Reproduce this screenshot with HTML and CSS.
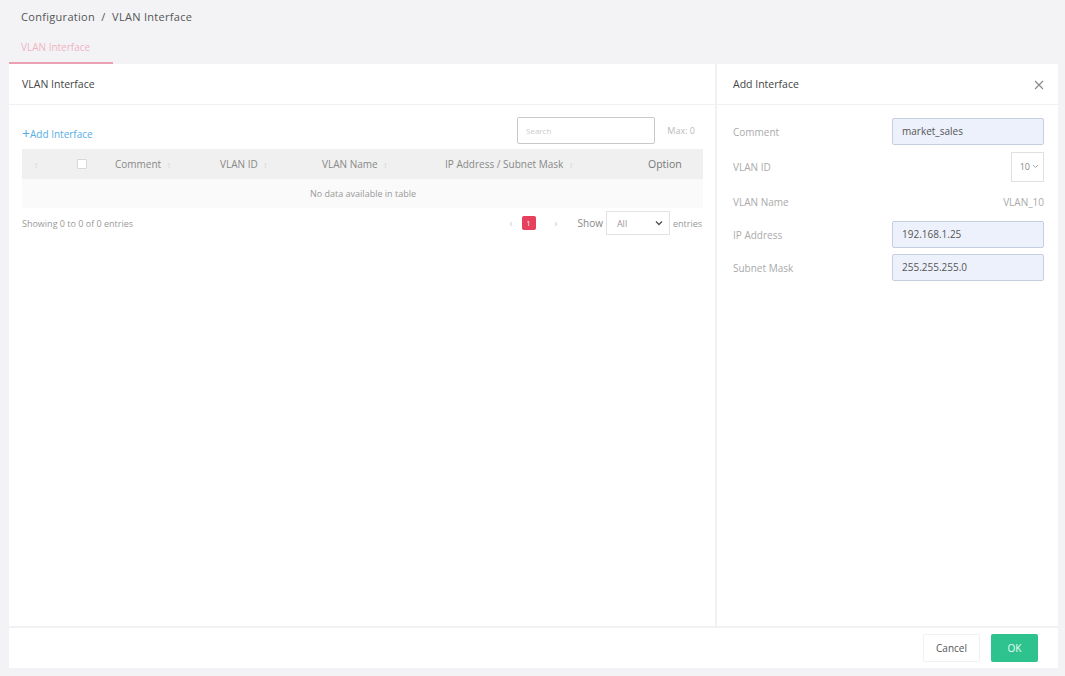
FILE: index.html
```html
<!DOCTYPE html>
<html lang="en">
<head>
    <meta charset="UTF-8">
    <meta name="viewport" content="width=device-width, initial-scale=1.0">
    <title>VLAN Interface</title>
    <link rel="stylesheet" href="styles.css">
</head>
<body>
    <div class="page">
        <div class="breadcrumb">Configuration&nbsp; /&nbsp; VLAN Interface</div>
        <div class="tabs">
            <div class="tab active">VLAN Interface</div>
        </div>

        <div class="card">
            <div class="card-body">
                <div class="panel left">
                    <div class="panel-head">VLAN Interface</div>
                    <div class="panel-content">
                        <div class="toolbar">
                            <a class="add-link"><span class="plus">+</span>Add Interface</a>
                            <div class="toolbar-right">
                                <input class="search" type="text" placeholder="Search">
                                <span class="max">Max: 0</span>
                            </div>
                        </div>

                        <table class="grid">
                            <thead>
                                <tr>
                                    <th class="c-sort"><span class="sort">↕</span></th>
                                    <th class="c-check"><span class="check"></span></th>
                                    <th class="c-comment">Comment <span class="sort">↕</span></th>
                                    <th class="c-id">VLAN ID <span class="sort">↕</span></th>
                                    <th class="c-name">VLAN Name <span class="sort">↕</span></th>
                                    <th class="c-ip">IP Address / Subnet Mask <span class="sort">↕</span></th>
                                    <th class="c-opt">Option</th>
                                </tr>
                            </thead>
                            <tbody>
                                <tr>
                                    <td colspan="7" class="empty">No data available in table</td>
                                </tr>
                            </tbody>
                        </table>

                        <div class="table-foot">
                            <span>Showing 0 to 0 of 0 entries</span>
                            <div class="pager">
                                <span class="arrow prev">‹</span>
                                <span class="page-num">1</span>
                                <span class="arrow next">›</span>
                                <span class="show">Show</span>
                                <div class="select-box">
                                    <span>All</span>
                                    <svg width="8" height="6" viewBox="0 0 8 6"><path d="M1 1.5 L4 4.5 L7 1.5" fill="none" stroke="#555" stroke-width="1.4"/></svg>
                                </div>
                                <span>entries</span>
                            </div>
                        </div>
                    </div>
                </div>

                <div class="panel right">
                    <div class="panel-head">
                        <span>Add Interface</span>
                        <svg class="close" width="10" height="10" viewBox="0 0 10 10"><path d="M1 1 L9 9 M9 1 L1 9" stroke="#888" stroke-width="1.1"/></svg>
                    </div>
                    <div class="form">
                        <div class="form-row">
                            <label>Comment</label>
                            <div class="field">market_sales</div>
                        </div>
                        <div class="form-row tall">
                            <label>VLAN ID</label>
                            <div class="mini-select">10<svg width="7" height="5" viewBox="0 0 7 5"><path d="M1 1 L3.5 3.5 L6 1" fill="none" stroke="#aaa" stroke-width="1"/></svg></div>
                        </div>
                        <div class="form-row">
                            <label>VLAN Name</label>
                            <span class="value">VLAN_10</span>
                        </div>
                        <div class="form-row">
                            <label>IP Address</label>
                            <div class="field">192.168.1.25</div>
                        </div>
                        <div class="form-row">
                            <label>Subnet Mask</label>
                            <div class="field">255.255.255.0</div>
                        </div>
                    </div>
                </div>
            </div>

            <div class="card-foot">
                <button class="btn cancel">Cancel</button>
                <button class="btn ok">OK</button>
            </div>
        </div>
    </div>
</body>
</html>
```

FILE: styles.css
```css
body {
    margin: 0;
    background-color: #f3f3f6;
    font-family: "Open Sans", "Liberation Sans", sans-serif;
    font-size: 10px;
    color: #666;
}
.page {
    width: 1049px;
    margin-left: 9px;
}
.breadcrumb {
    height: 34px;
    line-height: 34px;
    padding-left: 12px;
    font-size: 11px;
    letter-spacing: 0.3px;
    color: #555;
}
.tabs {
    display: flex;
    height: 30px;
}
.tab {
    width: 104px;
    box-sizing: border-box;
    padding-left: 12px;
    line-height: 26px;
    font-size: 10px;
    color: #efb3c3;
}
.tab.active {
    border-bottom: 2px solid #eb9fb3;
}
.card {
    background-color: #fff;
    height: 604px;
    display: flex;
    flex-direction: column;
}
.card-body {
    flex: 1;
    display: flex;
}
.panel.left {
    width: 706px;
    border-right: 2px solid #f1f1f3;
}
.panel.right {
    flex: 1;
}
.panel-head {
    height: 40px;
    border-bottom: 1px solid #f1f1f3;
    display: flex;
    align-items: center;
    justify-content: space-between;
    padding: 0 14px 0 13px;
    font-size: 10.5px;
    color: #444;
}
.right .panel-head {
    padding-left: 16px;
}
.close {
    margin-top: 2px;
}
.panel-content {
    padding: 11px 13px 0 13px;
}
.toolbar {
    display: flex;
    justify-content: space-between;
    align-items: center;
    height: 28px;
}
.add-link {
    color: #56aee6;
    font-size: 10px;
    margin-top: 7px;
}
.plus {
    font-size: 14px;
    vertical-align: -1px;
}
.toolbar-right {
    display: flex;
    align-items: center;
    gap: 8px;
    margin-right: 7px;
}
.search {
    width: 138px;
    height: 27px;
    box-sizing: border-box;
    border: 1px solid #c9c9c9;
    border-radius: 2px;
    font-family: inherit;
    font-size: 8px;
    padding: 0 8px;
}
.search::placeholder {
    color: #ccc;
}
.max {
    color: #bbb;
    font-size: 9px;
    width: 32px;
    text-align: right;
}
.grid {
    width: 681px;
    margin-top: 5px;
    border-collapse: collapse;
}
.grid th {
    height: 30px;
    background-color: #f0f0f0;
    font-weight: normal;
    text-align: left;
    color: #888;
    font-size: 10px;
    padding: 0;
}
.grid .sort {
    color: #d4d4d4;
    font-size: 8px;
    margin-left: 3px;
}
.c-sort { width: 41px; padding-left: 12px !important; }
.c-sort .sort { margin-left: 0; }
.c-check { width: 40px; }
.check {
    display: inline-block;
    width: 8px;
    height: 8px;
    border: 1px solid #d8d8d8;
    background-color: #fff;
    border-radius: 1px;
    vertical-align: -1px;
    margin-left: 2px;
}
.c-comment { width: 105px; }
.c-id { width: 102px; }
.c-name { width: 123px; }
.c-ip { width: 203px; }
.c-opt { text-align: left; color: #777 !important; font-size: 10.5px !important; }
.grid td.empty {
    height: 27px;
    background-color: #fafafa;
    text-align: center;
    color: #999;
    font-size: 9px;
    padding-right: 0;
}
.table-foot {
    display: flex;
    justify-content: space-between;
    align-items: center;
    margin-top: 3px;
    height: 24px;
    color: #999;
    font-size: 9px;
}
.pager {
    display: flex;
    align-items: center;
    color: #999;
}
.arrow {
    color: #ccc;
    font-size: 10px;
}
.arrow.prev {
    margin-right: 9px;
}
.arrow.next {
    margin: 0 20px 0 19px;
}
.page-num {
    width: 14px;
    height: 14px;
    background-color: #e6405c;
    color: #fff;
    border-radius: 2px;
    display: flex;
    align-items: center;
    justify-content: center;
    font-size: 7px;
}
.show {
    margin-right: 3px;
    font-size: 10px;
    color: #888;
}
.select-box {
    width: 64px;
    height: 24px;
    box-sizing: border-box;
    border: 1px solid #e2e2e2;
    display: flex;
    align-items: center;
    justify-content: space-between;
    padding: 0 6px 0 10px;
    margin-right: 3px;
    color: #999;
}
.form {
    padding: 10px 14px 0 16px;
}
.form-row {
    display: flex;
    justify-content: space-between;
    align-items: center;
    height: 33px;
}
.form-row.tall {
    height: 37px;
}
.form-row label {
    color: #aaa;
    font-size: 10px;
}
.field {
    width: 152px;
    height: 27px;
    box-sizing: border-box;
    border: 1px solid #c6cfe0;
    background-color: #edf1fb;
    border-radius: 2px;
    padding: 0 9px;
    line-height: 25px;
    color: #555;
    font-size: 10px;
}
.mini-select {
    width: 33px;
    height: 30px;
    box-sizing: border-box;
    border: 1px solid #e0e0e0;
    display: flex;
    align-items: center;
    justify-content: flex-end;
    gap: 2px;
    padding-right: 4px;
    color: #888;
    font-size: 9px;
}
.value {
    color: #aaa;
    font-size: 10px;
}
.card-foot {
    height: 40px;
    border-top: 2px solid #f1f1f3;
    display: flex;
    justify-content: flex-end;
    align-items: center;
    gap: 11px;
    padding-right: 20px;
}
.btn {
    height: 28px;
    border-radius: 2px;
    font-family: inherit;
    font-size: 10px;
    cursor: pointer;
}
.btn.cancel {
    width: 57px;
    background-color: #fff;
    border: 1px solid #f0f0f0;
    color: #555;
}
.btn.ok {
    width: 47px;
    background-color: #2ec28e;
    border: none;
    color: #e8fff6;
}
```
